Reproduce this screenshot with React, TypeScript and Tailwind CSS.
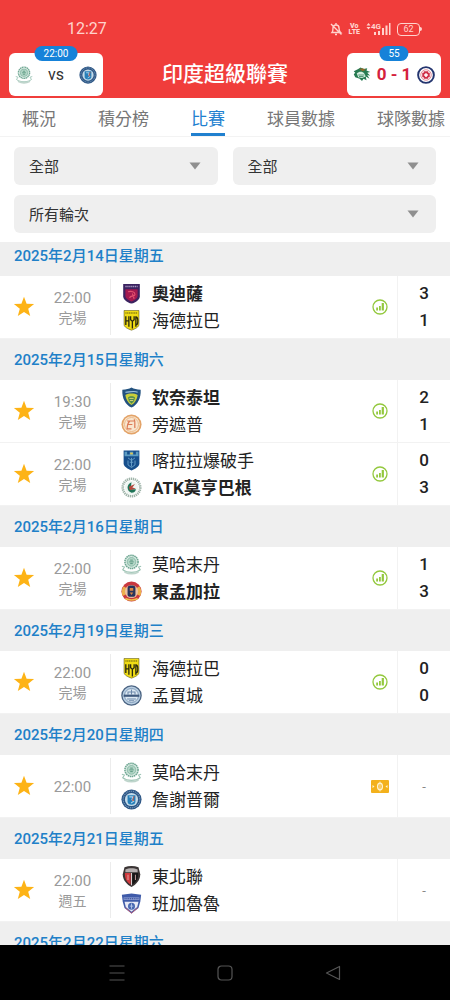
import { useState } from "react";
import type { ReactNode } from "react";

type TeamId =
  | "odisha"
  | "hyderabad"
  | "chennaiyin"
  | "punjab"
  | "kerala"
  | "mohun"
  | "mohammedan"
  | "eastBengal"
  | "mumbai"
  | "jamshedpur"
  | "northeast"
  | "bengaluru";

interface Side {
  id: TeamId;
  name: string;
  score?: number;
  winner?: boolean;
}

interface Match {
  time: string;
  status?: string;
  icon?: "stats" | "pitch";
  home: Side;
  away: Side;
}

interface MatchDay {
  date: string;
  matches: Match[];
}

const TABS = ["概況", "積分榜", "比賽", "球員數據", "球隊數據"];

const DAYS: MatchDay[] = [
  {
    date: "2025年2月14日星期五",
    matches: [
      {
        time: "22:00",
        status: "完場",
        icon: "stats",
        home: { id: "odisha", name: "奧迪薩", score: 3, winner: true },
        away: { id: "hyderabad", name: "海德拉巴", score: 1 },
      },
    ],
  },
  {
    date: "2025年2月15日星期六",
    matches: [
      {
        time: "19:30",
        status: "完場",
        icon: "stats",
        home: { id: "chennaiyin", name: "钦奈泰坦", score: 2, winner: true },
        away: { id: "punjab", name: "旁遮普", score: 1 },
      },
      {
        time: "22:00",
        status: "完場",
        icon: "stats",
        home: { id: "kerala", name: "喀拉拉爆破手", score: 0 },
        away: { id: "mohun", name: "ATK莫亨巴根", score: 3, winner: true },
      },
    ],
  },
  {
    date: "2025年2月16日星期日",
    matches: [
      {
        time: "22:00",
        status: "完場",
        icon: "stats",
        home: { id: "mohammedan", name: "莫哈末丹", score: 1 },
        away: { id: "eastBengal", name: "東孟加拉", score: 3, winner: true },
      },
    ],
  },
  {
    date: "2025年2月19日星期三",
    matches: [
      {
        time: "22:00",
        status: "完場",
        icon: "stats",
        home: { id: "hyderabad", name: "海德拉巴", score: 0 },
        away: { id: "mumbai", name: "孟買城", score: 0 },
      },
    ],
  },
  {
    date: "2025年2月20日星期四",
    matches: [
      {
        time: "22:00",
        icon: "pitch",
        home: { id: "mohammedan", name: "莫哈末丹" },
        away: { id: "jamshedpur", name: "詹謝普爾" },
      },
    ],
  },
  {
    date: "2025年2月21日星期五",
    matches: [
      {
        time: "22:00",
        status: "週五",
        home: { id: "northeast", name: "東北聯" },
        away: { id: "bengaluru", name: "班加魯魯" },
      },
    ],
  },
  { date: "2025年2月22日星期六", matches: [] },
];

const CRESTS: Record<TeamId, ReactNode> = {
  odisha: (
    <>
      <path d="M2.500 1h19v14c0 4-4.500 7-9.500 8.500C7 22 2.500 19 2.500 15z" fill="#3b2360" />
      <path d="M5 7h14v7.500c0 3-3 5-7 6.500-4-1.500-7-3.500-7-6.500z" fill="#a3194f" />
      <path d="M5 4h14" stroke="#a99ac4" strokeWidth="1.500" strokeDasharray="1.500 .7" />
      <path d="M8 10c4-1 8 0 8 3s-6 1-6 4M13 12l2 6" stroke="#e2506f" strokeWidth="1.300" fill="none" />
    </>
  ),
  hyderabad: (
    <>
      <path d="M3.500 .5h17v16c0 3-4 5-8.500 6.500-4.500-1.500-8.500-3.500-8.500-6.500z" fill="#f0dc14" />
      <path d="M5 3.500h14" stroke="#5d5510" strokeWidth="1.200" strokeDasharray="1.400 .6" />
      <path
        d="M5.500 7v10M9 7v12M5.500 12.500H9M11 7v4l2 2v8M15 7v4l-2 2M17 7v12M17 8c3 0 3 9 0 9"
        stroke="#29280f"
        strokeWidth="1.500"
        fill="none"
      />
      <path d="M3.500 .5h17v16c0 3-4 5-8.500 6.500-4.500-1.500-8.500-3.500-8.500-6.500z" fill="none" stroke="#4b450c" strokeWidth=".6" />
    </>
  ),
  chennaiyin: (
    <>
      <path d="M1.500 3C6 3 9 2 12 .5c3 1.500 6 2.500 10.500 2.500C23 13 19 20 12 23.500 5 20 1 13 1.500 3z" fill="#23527f" />
      <path d="M5 9c4-2 10-2 14 0-.5 5-3 9-7 11.500C8 18 5.500 14 5 9z" fill="#c9cf3a" />
      <path d="M8 12c2-2 6-2 8 0l-1 4-3 3-3-3z" fill="#4c8a4f" />
      <path d="M5 6c4 0 10-2 14 0" stroke="#9fc3dd" strokeWidth="1.300" fill="none" />
      <path d="M9.500 13h5M10 15.500h4" stroke="#e9e07a" strokeWidth="1" />
    </>
  ),
  punjab: (
    <>
      <circle cx="12" cy="12" r="11.500" fill="#e3a368" />
      <circle cx="12" cy="12" r="9.500" fill="#f9e6cf" />
      <circle cx="12" cy="12" r="8" fill="none" stroke="#e8b583" strokeWidth="1" />
      <path d="M7 8h8M10 8c-3 3-3 7-3 9h5M8 12h5M15 6c2 3 0 7 1 10" stroke="#dc7a55" strokeWidth="1.400" fill="none" />
    </>
  ),
  kerala: (
    <>
      <path d="M3 .5h18v15c0 3-4 6-9 8-5-2-9-5-9-8z" fill="#174f8c" />
      <path d="M4 2h3v3h3V2h4v3h3V2h3v5H4z" fill="#5c9cc2" />
      <path d="M8 9l4 3 4-3M8 12v5l4 3 4-3v-5M10 14h4M12 9v10" stroke="#6fa6cd" strokeWidth="1" fill="none" />
      <path d="M10.500 3h3v2h-3z" fill="#e1c64b" />
    </>
  ),
  mohun: (
    <>
      <circle cx="12" cy="12" r="10" fill="#fff" stroke="#9eb3a8" strokeWidth="3" strokeDasharray="1.500 .8" />
      <circle cx="12" cy="12" r="7.500" fill="#eef5f1" />
      <path d="M12 6c-6 2-6 10 0 12 3 0 5-2 5-4h-6z" fill="#1f7458" />
      <path d="M9 11l7-3-3 4 4 1-7 2z" fill="#b4483d" />
    </>
  ),
  mohammedan: (
    <>
      <circle cx="12" cy="9" r="7.500" fill="#dcece5" stroke="#6fa793" strokeWidth="1.800" strokeDasharray="1.800 .6" />
      <circle cx="12" cy="9" r="5" fill="#b3d6c7" stroke="#75ad98" strokeWidth=".8" />
      <path d="M9.500 9h5M10.500 7h3M10.500 11h3" stroke="#4f9078" strokeWidth="1" />
      <path d="M1 14l3 1-2 3c5 4 15 4 20 0l-2-3 3-1" fill="none" stroke="#9dc4b5" strokeWidth="1.200" />
      <path d="M4 20.500c5 2.500 11 2.500 16 0" fill="none" stroke="#bfd5cc" strokeWidth="2" />
    </>
  ),
  eastBengal: (
    <>
      <circle cx="12" cy="12" r="11.500" fill="#c9383f" />
      <path d="M3 6a11 11 0 0 0-1 11l4-2V8zM21 6a11 11 0 0 1 1 11l-4-2V8z" fill="#ecb04c" />
      <circle cx="12" cy="12" r="7.500" fill="#ecc1a0" />
      <rect x="7.500" y="5" width="9" height="13" rx="3" fill="#27355c" />
      <path d="M10 8h4v3h-4zM10 13h4l-2 3z" fill="#dc8543" />
      <path d="M5 20c4 2 10 2 14 0" stroke="#edc04d" strokeWidth="1.800" fill="none" />
    </>
  ),
  mumbai: (
    <>
      <circle cx="12" cy="12" r="11" fill="#b9cfe3" stroke="#4b6483" strokeWidth="1.500" />
      <circle cx="12" cy="12" r="8" fill="#dce8f2" stroke="#7893b2" strokeWidth="1" />
      <path d="M3 11h18v2.500H3z" fill="#3f597d" />
      <path d="M8 11V8h8v3M12 5v6M7 16h10M9 18h6" stroke="#6d89ab" strokeWidth="1.200" fill="none" />
    </>
  ),
  jamshedpur: (
    <>
      <circle cx="12" cy="12" r="11.500" fill="#2d5685" />
      <circle cx="12" cy="12" r="9.500" fill="none" stroke="#7fa1c1" strokeWidth="1.200" strokeDasharray="1.200 1" />
      <circle cx="12" cy="12" r="7.500" fill="#c3dae8" />
      <path d="M7.500 7h9v7c0 3-2 4-4.500 4s-4.500-1-4.500-4z" fill="#277fb9" />
      <path d="M9.500 9h4l-1 3 2 2-3 2" stroke="#a9d2ec" strokeWidth="1.200" fill="none" />
      <path d="M15 8l-2 5h2" stroke="#d0543f" strokeWidth="1" fill="none" />
    </>
  ),
  northeast: (
    <>
      <path d="M4 1.500c5-2 11-2 16 0l2 8c0 7-5 12-10 14.500C7 21.500 2 16.500 2 9.500z" fill="#3a3434" />
      <path d="M4.500 8H11v13c-4-2-7-6-6.500-13z" fill="#cf3a3e" />
      <path d="M13 8h6.500c.5 7-2.500 11-6.500 13z" fill="#171717" />
      <path d="M5 4c4-2 10-2 14 0v3H5z" fill="#b5afaf" />
      <path d="M11.500 8h1v14h-1z" fill="#efe4e4" />
      <path d="M8 10v6M16.500 10v6" stroke="#e8bcbc" strokeWidth=".9" />
    </>
  ),
  bengaluru: (
    <>
      <path d="M1 2l11-1.500L23 2l-1 8-2 7-8 6.500L4 17l-2-7z" fill="#3f5ba9" />
      <path d="M4 10h16l-1.500 6-6.500 5.500L5.500 16z" fill="#e7e9f5" />
      <path d="M3 5h18v3H3z" fill="#8c9dd2" />
      <path d="M4 6.500h16" stroke="#2c4490" strokeWidth="1.200" strokeDasharray="1.300 .8" />
      <circle cx="12" cy="15" r="4" fill="#4767b2" />
      <path d="M12 12v6M10 15h4" stroke="#b8c9ea" strokeWidth="1" />
      <path d="M5 17l7 6 7-6" fill="none" stroke="#c75a6e" strokeWidth="1" />
    </>
  ),
};

function Crest({ id, className = "size-[21px]" }: { id: TeamId; className?: string }) {
  return (
    <svg viewBox="0 0 24 24" className={`${className} shrink-0`} aria-hidden="true">
      {CRESTS[id]}
    </svg>
  );
}

function StatsIcon() {
  return (
    <svg width="16" height="16" viewBox="0 0 16 16" fill="#93c83d" aria-hidden="true">
      <circle cx="8" cy="8" r="7" fill="none" stroke="#93c83d" strokeWidth="1.300" />
      <rect x="4.200" y="8.500" width="1.800" height="3" />
      <rect x="7" y="7" width="1.800" height="4.500" />
      <rect x="9.700" y="4" width="2.200" height="7.500" />
    </svg>
  );
}

function PitchIcon() {
  return (
    <svg width="18" height="13" viewBox="0 0 18 13" aria-hidden="true">
      <rect width="18" height="13" rx="1" fill="#f3b11c" />
      <g fill="none" stroke="#fff3d0" strokeWidth="1.300">
        <ellipse cx="9" cy="6.500" rx="2.400" ry="3.300" />
        <path d="M9 1.500v10" strokeWidth=".8" />
      </g>
      <path d="M1.500 5l2 1.500-2 1.500zM16.500 5l-2 1.500 2 1.500z" fill="#fff3d0" />
    </svg>
  );
}

function StatusBar() {
  return (
    <div className="flex h-[46px] items-end justify-between pr-7 pb-2 pl-[67px] text-[#ffd3cd]">
      <span className="text-[16px] leading-[18px]">12:27</span>
      <div className="flex h-[18px] items-center gap-[6px]">
        <svg width="14" height="14" viewBox="0 0 14 14" fill="none" stroke="currentColor" strokeWidth="1.400" aria-hidden="true">
          <path d="M7 1v1.500M3 10.500c.8-1 1-2.500 1-4.500a3 3 0 0 1 6 0c0 2 .2 3.500 1.500 4.500zM6 12.500h2M2 2l10.500 10.500" />
        </svg>
        <span className="flex flex-col items-center text-[7px] leading-[6px] font-black">
          <span>Vo</span>
          <span>LTE</span>
        </span>
        <svg width="25" height="14" viewBox="0 0 25 14" fill="currentColor" aria-label="4G">
          <path d="M2.500 1l2 2.500h-4zM2.500 7.500l2-2.500h-4z" />
          <text x="5" y="7" fontSize="8" fontWeight="700">
            4G
          </text>
          <path d="M8 10h2v3H8zM12 9h2v4h-2zM16 6h2v7h-2zM19.500 3.500h2V13h-2zM23 1h1.500v12H23z" />
        </svg>
        <span className="flex items-center">
          <span className="flex h-[13px] w-[23px] items-center justify-center rounded border border-current text-[9px] leading-none">62</span>
          <span className="h-1 w-0.5 rounded-r bg-current" />
        </span>
      </div>
    </div>
  );
}

function LiveCard({ badge, children }: { badge: string; children: ReactNode }) {
  return (
    <a href="#live" className="relative flex h-[43px] w-[94px] items-center justify-between rounded-md bg-white px-[6px]">
      <span className="absolute -top-[7px] left-1/2 -translate-x-1/2 rounded-lg bg-[#1682d9] px-[9px] text-[10px] leading-[15px] text-white">
        {badge}
      </span>
      {children}
    </a>
  );
}

function Header() {
  return (
    <header className="bg-[#f03d3b]">
      <StatusBar />
      <div className="flex h-[52px] items-end justify-between px-[9px] pb-[2px]">
        <LiveCard badge="22:00">
          <Crest id="mohammedan" className="size-[18px]" />
          <span className="text-[16px] text-[#333]">vs</span>
          <Crest id="jamshedpur" className="size-[18px]" />
        </LiveCard>
        <h1 className="text-[21px] leading-[43px] font-medium text-white">印度超級聯賽</h1>
        <LiveCard badge="55">
          <svg width="18" height="18" viewBox="0 0 24 24" className="shrink-0" aria-hidden="true">
            <path d="M1 7l6-3 3-2 4 2 5-1-1 3 5 2-4 1 4 4-4-1 3 5-5-3 1 5-4-2-2 3-3-3-6-2-2-4 2-2z" fill="#277a51" />
            <path d="M5 10c3-3 8-3 10 0l2 4-5 2-5-1z" fill="#d5eee0" />
            <path d="M7 12h8M8 14h6" stroke="#277a51" strokeWidth="1" />
            <path d="M8 4l5-1 4 2-4 2z" fill="#8a6a2b" />
          </svg>
          <span className="text-[17px] font-bold whitespace-nowrap text-[#d4213d]">0 - 1</span>
          <svg width="18" height="18" viewBox="0 0 24 24" className="shrink-0" aria-hidden="true">
            <circle cx="12" cy="12" r="10.500" fill="#fff" stroke="#24356f" strokeWidth="2.600" />
            <circle cx="12" cy="12" r="7" fill="#fff" stroke="#d9687a" strokeWidth="1" />
            <path d="M9 7h6v2h2v6h-2v2H9v-2H7V9h2z" fill="#cf2f48" />
            <path d="M11 9.500h2V11h1.500v2H13v1.500h-2V13H9.500v-2H11z" fill="#fff" />
          </svg>
        </LiveCard>
      </div>
    </header>
  );
}

function Tabs({ active, onChange }: { active: string; onChange: (tab: string) => void }) {
  return (
    <nav className="flex h-[39px] shrink-0 gap-[42px] overflow-hidden border-b border-[#f3f3f3] pl-[22px]">
      {TABS.map((tab) => (
        <button
          key={tab}
          type="button"
          onClick={() => onChange(tab)}
          className={`shrink-0 border-b-[3px] pt-2 text-[17px] ${
            tab === active ? "border-[#2080cf] text-[#2080cf]" : "border-transparent text-[#777]"
          }`}
        >
          {tab}
        </button>
      ))}
    </nav>
  );
}

function Filter({ label, option }: { label: string; option: string }) {
  return (
    <label className="relative block flex-1">
      <select
        aria-label={label}
        className="h-[38px] w-full appearance-none rounded-md bg-[#efefef] px-[15px] pt-[2px] text-[15px] text-[#333] focus:outline-none"
      >
        <option>{option}</option>
      </select>
      <svg width="12" height="8" viewBox="0 0 12 8" className="pointer-events-none absolute top-[15px] right-[17px]" aria-hidden="true">
        <path d="M.5.500h11L6 7.500z" fill="#8f8f8f" />
      </svg>
    </label>
  );
}

function TeamLine({ side }: { side: Side }) {
  return (
    <div className="flex items-center gap-[10px]">
      <Crest id={side.id} />
      <span className={`pt-[2px] text-[17px] leading-[25px] text-[#222] ${side.winner ? "font-bold" : ""}`}>{side.name}</span>
    </div>
  );
}

function MatchRow({ match }: { match: Match }) {
  const [starred, setStarred] = useState(true);
  const { home, away } = match;

  return (
    <li className="flex h-[63px] items-center border-b border-[#f2f2f2] bg-white">
      <button
        type="button"
        aria-label="Favourite"
        aria-pressed={starred}
        onClick={() => setStarred(!starred)}
        className="flex w-12 justify-center"
      >
        <svg width="22" height="22" viewBox="0 0 22 22" fill={starred ? "#fdb316" : "#ccc"}>
          <path d="M11 .8l2.600 7 7.500.3-5.900 4.700 2 7.200L11 15.900 4.800 20l2-7.200L.9 8.100l7.500-.3z" />
        </svg>
      </button>
      <div className="w-[49px] pt-px text-center leading-5 text-[#9a9a9a]">
        <div className="text-[15px]">{match.time}</div>
        {match.status && <div className="text-[14px]">{match.status}</div>}
      </div>
      <div className="ml-[13px] flex h-14 flex-1 flex-col justify-center border-l border-[#ececec] pl-[10px]">
        <TeamLine side={home} />
        <TeamLine side={away} />
      </div>
      <div className="flex w-[34px] justify-center">
        {match.icon === "stats" && <StatsIcon />}
        {match.icon === "pitch" && <PitchIcon />}
      </div>
      <div className="flex h-full w-[53px] flex-col justify-center border-l border-[#f2f2f2] text-center text-[17px] leading-[27px] font-medium text-[#222]">
        {home.score === undefined ? (
          <span className="text-[13px] font-normal text-[#888]">-</span>
        ) : (
          <>
            <span>{home.score}</span>
            <span>{away.score}</span>
          </>
        )}
      </div>
    </li>
  );
}

function SystemNav() {
  return (
    <div className="flex h-[55px] shrink-0 items-center justify-center gap-[92px] bg-black text-[#555]">
      <button type="button" aria-label="Recents">
        <svg width="16" height="16" viewBox="0 0 16 16" fill="none" stroke="currentColor" strokeWidth="1.200">
          <path d="M.5 1h15M.5 8h15M.5 15h15" />
        </svg>
      </button>
      <button type="button" aria-label="Home">
        <svg width="16" height="16" viewBox="0 0 16 16" fill="none" stroke="currentColor" strokeWidth="1.200">
          <rect x="1" y="1" width="14" height="14" rx="3.500" />
        </svg>
      </button>
      <button type="button" aria-label="Back">
        <svg width="16" height="16" viewBox="0 0 16 16" fill="none" stroke="currentColor" strokeWidth="1.200" strokeLinejoin="round">
          <path d="M14.500 1.500v13L1.500 8z" />
        </svg>
      </button>
    </div>
  );
}

export default function App() {
  const [tab, setTab] = useState("比賽");

  return (
    <div className="flex h-screen flex-col bg-white font-['Roboto','Noto_Sans_CJK_TC',sans-serif]">
      <Header />
      <Tabs active={tab} onChange={setTab} />
      <div className="relative z-10 flex flex-col gap-[10px] bg-white px-[14px] pt-[10px] pb-[9px]">
        <div className="flex gap-[15px]">
          <Filter label="Season" option="全部" />
          <Filter label="Team" option="全部" />
        </div>
        <Filter label="Round" option="所有輪次" />
      </div>
      {/* list slides up under the filters while scrolling */}
      <main className="-mt-[7px] min-h-0 flex-1 overflow-y-auto bg-[#efefef] [scrollbar-width:none]">
        {DAYS.map((day) => (
          <section key={day.date}>
            <h2 className="px-[14px] pt-[2px] text-[15px] leading-[39px] font-medium text-[#2080c8]">{day.date}</h2>
            <ul>
              {day.matches.map((match) => (
                <MatchRow key={match.home.id} match={match} />
              ))}
            </ul>
          </section>
        ))}
      </main>
      <SystemNav />
    </div>
  );
}
